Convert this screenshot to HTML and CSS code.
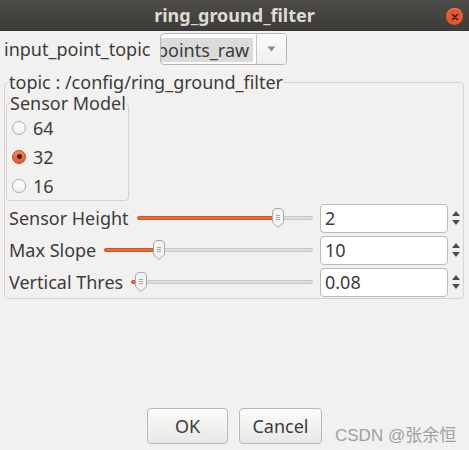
FILE: index.html
```html
<!DOCTYPE html>
<html>
<head>
<meta charset="utf-8">
<link rel="stylesheet" href="styles.css">
</head>
<body>
<div class="window">
  <div class="titlebar">
    <span class="title">ring_ground_filter</span>
    <span class="close"><svg width="10" height="10" viewBox="0 0 10 10"><path d="M2.5 2.5L7.5 7.5M7.5 2.5L2.5 7.5" stroke="#3a1a10" stroke-width="1.5" stroke-linecap="round"/></svg></span>
  </div>
  <div class="content">
    <div class="toprow">
      <span class="label">input_point_topic</span>
      <div class="combo">
        <div class="combo-text"><span class="sel">points_raw</span></div>
        <div class="combo-btn"><svg width="9" height="6" viewBox="0 0 9 6"><path d="M0.5 0.5H8.5L4.5 5.5Z" fill="#8a8a8a"/></svg></div>
      </div>
    </div>
    <fieldset class="group">
      <legend class="group-title">topic : /config/ring_ground_filter</legend>
      <fieldset class="subgroup">
        <legend class="sub-title">Sensor Model</legend>
        <div class="radio-row"><span class="radio"></span><span>64</span></div>
        <div class="radio-row"><span class="radio checked"></span><span>32</span></div>
        <div class="radio-row"><span class="radio"></span><span>16</span></div>
      </fieldset>
      <div class="param-row">
        <span class="plabel">Sensor Height</span>
        <div class="slider"><div class="track"><div class="fill" style="width:82.5%"></div></div><svg class="handle" style="left:calc((100% - 12px) * 0.825)" width="12" height="20" viewBox="0 0 12 20"><path d="M0.5 5 Q0.5 0.5 5 0.5 H7 Q11.5 0.5 11.5 5 V14.5 L6 19.5 L0.5 14.5 Z" fill="#f3f3f2" stroke="#a9a8a6"/><path d="M4 7.5H8M4 9.5H8M4 11.5H8" stroke="#a8a7a5"/></svg></div>
        <div class="spin">2</div>
        <div class="arrows"><span class="up"></span><span class="down"></span></div>
      </div>
      <div class="param-row">
        <span class="plabel">Max Slope</span>
        <div class="slider"><div class="track"><div class="fill" style="width:25%"></div></div><svg class="handle" style="left:calc((100% - 12px) * 0.25)" width="12" height="20" viewBox="0 0 12 20"><path d="M0.5 5 Q0.5 0.5 5 0.5 H7 Q11.5 0.5 11.5 5 V14.5 L6 19.5 L0.5 14.5 Z" fill="#f3f3f2" stroke="#a9a8a6"/><path d="M4 7.5H8M4 9.5H8M4 11.5H8" stroke="#a8a7a5"/></svg></div>
        <div class="spin">10</div>
        <div class="arrows"><span class="up"></span><span class="down"></span></div>
      </div>
      <div class="param-row">
        <span class="plabel">Vertical Thres</span>
        <div class="slider"><div class="track"><div class="fill" style="width:3%"></div></div><svg class="handle" style="left:calc((100% - 12px) * 0.024)" width="12" height="20" viewBox="0 0 12 20"><path d="M0.5 5 Q0.5 0.5 5 0.5 H7 Q11.5 0.5 11.5 5 V14.5 L6 19.5 L0.5 14.5 Z" fill="#f3f3f2" stroke="#a9a8a6"/><path d="M4 7.5H8M4 9.5H8M4 11.5H8" stroke="#a8a7a5"/></svg></div>
        <div class="spin">0.08</div>
        <div class="arrows"><span class="up"></span><span class="down"></span></div>
      </div>
    </fieldset>
    <div class="footer">
      <button class="btn ok">OK</button>
      <button class="btn cancel">Cancel</button>
      <span class="watermark">CSDN @张余恒</span>
    </div>
  </div>
</div>
</body>
</html>
```
FILE: styles.css
```css
* { box-sizing: border-box; }
html, body { margin: 0; padding: 0; }
body {
  width: 469px;
  height: 450px;
  background: #f2f1f0;
  font-family: "Noto Sans", "DejaVu Sans", sans-serif;
  font-size: 18px;
  color: #3c3c3c;
  overflow: hidden;
}
.window { height: 450px; display: flex; flex-direction: column; }
.titlebar {
  height: 31px;
  flex: none;
  background: linear-gradient(#4d4c48, #3c3b37);
  display: flex;
  align-items: center;
  justify-content: center;
  position: relative;
}
.title {
  font-weight: bold;
  font-size: 18px;
  color: #dfdbd2;
  line-height: 31px;
}
.close {
  position: absolute;
  right: 6px;
  top: 8px;
  width: 17px;
  height: 17px;
  border-radius: 50%;
  background: #e5582b;
  box-shadow: inset 0 1px 0 rgba(255,170,130,0.6);
  display: flex;
  align-items: center;
  justify-content: center;
}
.content {
  flex: 1;
  display: flex;
  flex-direction: column;
  padding: 2px 0 0 0;
}
.toprow {
  display: flex;
  align-items: center;
  height: 32px;
  padding-left: 4px;
}
.label { line-height: 32px; width: 156px; white-space: nowrap; }
.combo {
  width: 127px;
  height: 32px;
  border: 1px solid #b6b6b4;
  border-radius: 4px;
  display: flex;
  background: #fcfcfc;
  overflow: hidden;
}
.combo-text {
  width: 95px;
  overflow: hidden;
  display: flex;
  align-items: center;
  padding-top: 1px;
}
.sel {
  background: #dcdbd9;
  line-height: 24px;
  margin-left: -4px;
  padding-right: 4px;
  white-space: nowrap;
}
.combo-btn {
  flex: 1;
  border-left: 1px solid #c8c7c5;
  display: flex;
  align-items: center;
  justify-content: center;
  background: linear-gradient(#fbfbfb, #f0efee);
}
.group {
  margin: 7px 5px 0 4px;
  padding: 0 0 0 1px;
  border: 1px solid #d4d3d1;
  border-radius: 4px;
  min-width: 0;
}
.group-title {
  padding: 0;
  margin-left: 3px;
  line-height: 20px;
  padding-right: 1px;
  white-space: nowrap;
}
.subgroup {
  width: 123px;
  margin: 1px 0 0 0;
  padding: 0;
  border: 1px solid #d4d3d1;
  border-radius: 4px;
  min-width: 0;
}
.sub-title {
  padding: 0;
  margin-left: 3px;
  line-height: 20px;
  white-space: nowrap;
}
.radio-row {
  height: 29px;
  display: flex;
  align-items: center;
  gap: 7px;
  padding-left: 5px;
}
.radio {
  width: 14px;
  height: 14px;
  border-radius: 50%;
  border: 1px solid #adaca9;
  background: linear-gradient(#ffffff, #f0f0ef);
  display: flex;
  align-items: center;
  justify-content: center;
}
.radio.checked {
  border-color: #c24a1f;
  background: linear-gradient(#f3875a, #e3582a);
}
.radio.checked::after {
  content: "";
  width: 5px;
  height: 5px;
  border-radius: 50%;
  background: #4a2418;
}
.param-row {
  height: 32px;
  display: flex;
  align-items: center;
  padding-left: 3px;
}
.param-row:first-of-type { margin-top: 1px; }
.plabel { white-space: nowrap; margin-right: 8px; }
.slider {
  flex: 1;
  height: 20px;
  position: relative;
  display: flex;
  align-items: center;
  margin-right: 7px;
}
.track {
  width: 100%;
  height: 4px;
  background: #dedddb;
  border: 1px solid #cbcac8;
  border-radius: 2px;
  position: relative;
}
.fill {
  position: absolute;
  left: -1px;
  top: -1px;
  bottom: -1px;
  background: #ec6a3a;
  border: 1px solid #d4541f;
  border-radius: 2px;
}
.handle {
  position: absolute;
  top: 0;
  display: block;
}
.spin {
  width: 128px;
  height: 29px;
  border: 1px solid #bcbbb9;
  border-radius: 4px;
  background: #ffffff;
  padding-left: 4px;
  line-height: 27px;
}
.arrows {
  width: 15px;
  display: flex;
  flex-direction: column;
  align-items: center;
  gap: 4px;
}
.up, .down {
  width: 0;
  height: 0;
  border-left: 4px solid transparent;
  border-right: 4px solid transparent;
}
.up { border-bottom: 5px solid #4f4f4f; }
.down { border-top: 5px solid #4f4f4f; }
.footer {
  margin-top: auto;
  height: 42px;
  display: flex;
  align-items: flex-start;
  padding-left: 147px;
}
.btn {
  height: 36px;
  font-family: "Noto Sans", "DejaVu Sans", sans-serif;
  font-size: 18px;
  color: #3c3c3c;
  border: 1px solid #b9b8b6;
  border-radius: 4px;
  background: linear-gradient(#fbfbfa, #e9e8e6);
  padding: 0;
}
.ok { width: 81px; margin-right: 11px; }
.cancel { width: 83px; }
.watermark {
  margin-left: 13px;
  margin-top: 13px;
  font-family: "Liberation Sans", "Noto Sans CJK SC", sans-serif;
  font-size: 17px;
  color: #a0a0a0;
  white-space: nowrap;
}
```
